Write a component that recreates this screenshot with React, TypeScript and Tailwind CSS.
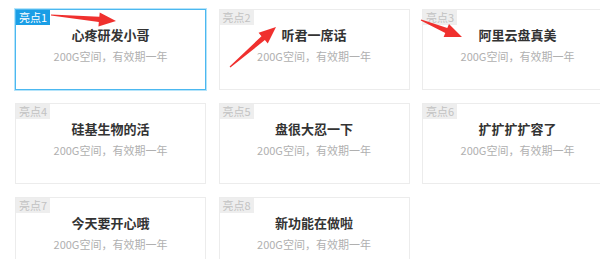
const cards = [
  { n: 1, title: '心疼研发小哥' },
  { n: 2, title: '听君一席话' },
  { n: 3, title: '阿里云盘真美' },
  { n: 4, title: '硅基生物的活' },
  { n: 5, title: '盘很大忍一下' },
  { n: 6, title: '扩扩扩扩容了' },
  { n: 7, title: '今天要开心哦' },
  { n: 8, title: '新功能在做啦' },
]

// tapered screenshot-style arrow from tail to tip
function arrowPoints(x1: number, y1: number, x2: number, y2: number) {
  const dx = x2 - x1
  const dy = y2 - y1
  const len = Math.hypot(dx, dy)
  const ux = dx / len
  const uy = dy / len
  const px = -uy
  const py = ux
  const headLen = 17
  const headW = 7
  const neckW = 2.6
  const tailW = 0.6
  const bx = x2 - ux * headLen
  const by = y2 - uy * headLen
  const pts = [
    [x1 + px * tailW, y1 + py * tailW],
    [bx + px * neckW, by + py * neckW],
    [bx + px * headW, by + py * headW],
    [x2, y2],
    [bx - px * headW, by - py * headW],
    [bx - px * neckW, by - py * neckW],
    [x1 - px * tailW, y1 - py * tailW],
  ]
  return pts.map(p => p.join(',')).join(' ')
}

function Card({ n, title }: { n: number; title: string }) {
  const active = n === 1
  return (
    // 1px frame drawn with a padded coloured background
    <div
      className={`h-[81px] p-px ${active ? 'bg-[#4cb8f0] shadow-[0_0_0_1px_rgba(120,205,245,0.55)]' : 'bg-[#ececec]'}`}
    >
      <div className="relative h-full bg-white">
        <div
          className={`absolute left-0 top-0 h-[15px] px-[3px] text-[11px] leading-[15px] ${active ? 'bg-[#1a9ee6] text-white' : 'bg-[#eeeeee] text-[#c2c2c2]'}`}
        >
          亮点{n}
        </div>
        <div className="pt-[16px] text-center text-[13px] font-bold leading-[18px] text-[#333]">{title}</div>
        <div className="mt-[4px] text-center text-[11px] leading-[16px] text-[#b0b0b0]">200G空间，有效期一年</div>
      </div>
    </div>
  )
}

export default function App() {
  return (
    <div
      className="relative w-[600px] h-[259px] overflow-hidden bg-white"
      style={{ fontFamily: '"Noto Sans CJK SC", "Noto Sans", sans-serif' }}
    >
      <div className="grid grid-cols-[191px_191px_191px] gap-x-[12.5px] gap-y-[13px] pl-[15px] pt-[9px] w-[640px]">
        {cards.map(c => (
          <Card key={c.n} n={c.n} title={c.title} />
        ))}
      </div>
      <svg className="absolute left-0 top-0" width="600" height="259">
        <polygon points={arrowPoints(51, 15, 116, 21)} fill="#f0302e" />
        <polygon points={arrowPoints(230, 67, 276, 27)} fill="#f0302e" />
        <polygon points={arrowPoints(421, 20, 462, 37)} fill="#f0302e" />
      </svg>
    </div>
  )
}
